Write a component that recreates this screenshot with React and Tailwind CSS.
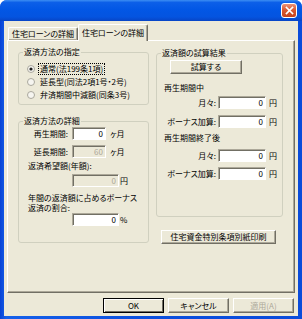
import React from "react";

const raised =
  "border border-t-white border-l-white border-r-[#716F64] border-b-[#716F64] shadow-[inset_-1px_-1px_0_#ACA899]";

function Btn({ children, className = "", disabled = false, isDefault = false }) {
  const edge = isDefault
    ? "border border-black shadow-[inset_1px_1px_0_#fff,inset_-1px_-1px_0_#716F64]"
    : raised;
  return (
    <div
      className={`flex items-center justify-center bg-[#ECE9D8] ${edge} ${
        disabled ? "text-[#ACA899]" : "text-black"
      } ${className}`}
    >
      {children}
    </div>
  );
}

function Field({ value, className = "", disabled = false }) {
  return (
    <div
      className={`h-[13px] flex items-center justify-end pr-[2px] border border-t-[#ACA899] border-l-[#ACA899] border-r-white border-b-white shadow-[inset_1px_1px_0_#716F64] leading-[11px] ${
        disabled ? "bg-[#ECE9D8] text-[#ACA899]" : "bg-white text-black"
      } ${className}`}
    >
      {value}
    </div>
  );
}

function Radio({ checked }) {
  return (
    <svg width="8" height="8" viewBox="0 0 8 8" className="shrink-0">
      <circle cx="4" cy="4" r="3.5" fill="#F6F5F0" stroke="#A9A79C" strokeWidth="1" />
      {checked && <circle cx="4" cy="4" r="1.6" fill="#222" />}
    </svg>
  );
}

function Group({ title, className = "", children }) {
  return (
    <fieldset className={`border border-[#D0D0BF] rounded-[3px] ${className}`}>
      <legend className="ml-[4px] px-[1px] leading-[12px]">{title}</legend>
      {children}
    </fieldset>
  );
}

function YenRow({ label, className = "" }) {
  return (
    <div className={`flex items-center h-[13px] ${className}`}>
      <span className="w-[59px] text-right">{label}</span>
      <Field value="0" className="ml-[2px] w-[48px]" />
      <span className="ml-[3px]">円</span>
    </div>
  );
}

export default function App() {
  return (
    <div className="w-[302px] h-[319px] flex flex-col rounded-t-[7px] overflow-hidden bg-[linear-gradient(to_right,#0842D5,#1560EA_2%,#0A4FDD_50%,#0A4BDA)] font-['Noto_Sans_CJK_JP',sans-serif] [font-feature-settings:'palt'] text-[8px] leading-[12px] text-black">
      {/* title bar */}
      <div className="h-[21px] shrink-0 flex items-center justify-end pr-[5px] bg-[linear-gradient(to_bottom,#3C8EF3_0%,#0C5FE8_12%,#0257E5_45%,#0454E0_80%,#0745C6_100%)]">
        <div className="w-[16px] h-[15px] rounded-[3px] border border-white bg-[linear-gradient(to_bottom,#EC9378,#DA5A33_45%,#C6421C)] flex items-center justify-center">
          <svg width="9" height="9" viewBox="0 0 9 9">
            <path d="M1.5 1.5 L7.5 7.5 M7.5 1.5 L1.5 7.5" stroke="white" strokeWidth="1.7" strokeLinecap="square" />
          </svg>
        </div>
      </div>

      <div className="flex-1 mx-[4px] mb-[3px] bg-[#ECE9D8] flex flex-col pt-[3px] px-[3px]">
        {/* tabs */}
        <div className="h-[16px] shrink-0 flex items-end pl-[1px]">
          <div className={`w-[70px] h-[13px] flex items-center justify-center rounded-t-[2px] border-b-0 ${raised}`}>
            住宅ローンの詳細
          </div>
          <div className="relative z-10 w-[70px] h-[17px] -mb-[1px] flex items-start pt-[2px] justify-center rounded-t-[2px] bg-[#ECE9D8] border border-b-0 border-t-white border-l-white border-r-[#716F64] shadow-[inset_-1px_0_0_#ACA899]">
            住宅ローンの詳細
          </div>
        </div>

        {/* panel */}
        <div className={`h-[253px] shrink-0 flex pl-[10px] pt-[5px] ${raised}`}>
          <div className="w-[131px] flex flex-col">
            <Group title="返済方法の指定">
              <div className="pt-[4px] pb-[3px]">
                <div className="h-[13px] flex items-center">
                  <span className="ml-[8px]"><Radio checked /></span>
                  <span className="ml-[3px] px-[1px] leading-[10px] border border-dotted border-black">通常(法199条1項)</span>
                </div>
                <div className="h-[13px] flex items-center">
                  <span className="ml-[8px]"><Radio /></span>
                  <span className="ml-[5px]">延長型(同法2項1号・2号)</span>
                </div>
                <div className="h-[13px] flex items-center">
                  <span className="ml-[8px]"><Radio /></span>
                  <span className="ml-[5px]">弁済期間中減額(同条3号)</span>
                </div>
              </div>
            </Group>

            <Group title="返済方法の詳細" className="mt-[10px]">
              <div className="pb-[16px]">
                <div className="h-[13px] flex items-center">
                  <span className="w-[49px] text-right">再生期間:</span>
                  <Field value="0" className="ml-[4px] w-[34px]" />
                  <span className="ml-[4px]">ヶ月</span>
                </div>
                <div className="mt-[5px] h-[13px] flex items-center">
                  <span className="w-[49px] text-right">延長期間:</span>
                  <Field value="60" disabled className="ml-[4px] w-[34px]" />
                  <span className="ml-[4px]">ヶ月</span>
                </div>
                <div className="mt-[2px] ml-[9px]">返済希望額(年額):</div>
                <div className="mt-[2px] pl-[53px] h-[13px] flex items-center">
                  <Field value="0" disabled className="w-[47px]" />
                  <span className="ml-[1px]">円</span>
                </div>
                <div className="mt-[6px] ml-[9px] leading-[10px]">
                  年間の返済額に占めるボーナス
                  <br />
                  返済の割合:
                </div>
                <div className="pl-[53px] h-[13px] flex items-center">
                  <Field value="0" className="w-[47px]" />
                  <span className="ml-[1px]">%</span>
                </div>
              </div>
            </Group>
          </div>

          <div className="ml-[7px] w-[127px] flex flex-col">
            <Group title="返済額の試算結果" className="mt-[1px]">
              <div className="pb-[36px]">
                <Btn className="mt-[1px] ml-[13px] w-[72px] h-[14px]">試算する</Btn>
                <div className="mt-[8px] ml-[7px]">再生期間中</div>
                <YenRow label="月々:" className="mt-[2px]" />
                <YenRow label="ボーナス加算:" className="mt-[6px]" />
                <div className="mt-[4px] ml-[7px]">再生期間終了後</div>
                <YenRow label="月々:" className="mt-[5px]" />
                <YenRow label="ボーナス加算:" className="mt-[5px]" />
              </div>
            </Group>
            <Btn className="mt-[13px] ml-[5px] w-[115px] h-[14px]">住宅資金特別条項別紙印刷</Btn>
          </div>
        </div>

        {/* dialog buttons */}
        <div className="mt-[5px] h-[15px] shrink-0 flex justify-end gap-[4px] pr-[1px]">
          <Btn isDefault className="w-[61px]">OK</Btn>
          <Btn className="w-[61px]">キャンセル</Btn>
          <Btn disabled className="w-[61px]">適用(A)</Btn>
        </div>
      </div>
    </div>
  );
}
